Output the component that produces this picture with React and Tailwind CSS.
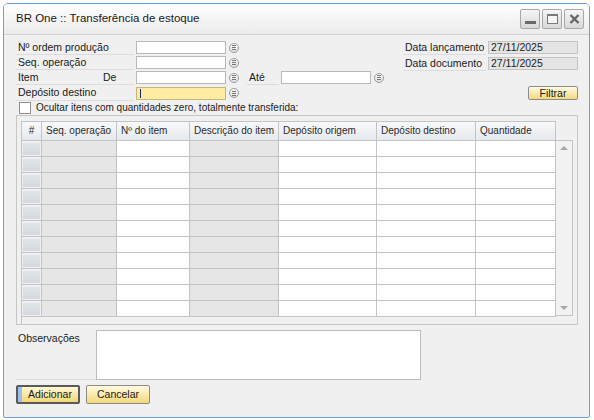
import React from 'react';

// SAP-style form: Transferência de estoque

const colunas = [
  { titulo: '#', w: 'w-[20px]', tipo: 'num' },
  { titulo: 'Seq. operação', w: 'w-[75px]', tipo: 'cinza' },
  { titulo: 'Nº do item', w: 'w-[73px]', tipo: 'branco' },
  { titulo: 'Descrição do item', w: 'w-[89px]', tipo: 'cinza' },
  { titulo: 'Depósito origem', w: 'w-[98px]', tipo: 'branco' },
  { titulo: 'Depósito destino', w: 'w-[99px]', tipo: 'branco' },
  { titulo: 'Quantidade', w: 'w-[80px]', tipo: 'branco' },
];

const linhas = Array.from({ length: 11 }, (_, i) => i);

function Lookup() {
  return (
    <div className="ml-[3px] w-[10px] h-[10px] rounded-full border border-[#9a9a9a] bg-gradient-to-b from-white to-[#dedede] flex flex-col items-center justify-center gap-[1px]">
      <div className="w-[4px] h-px bg-[#777]" />
      <div className="w-[4px] h-px bg-[#777]" />
      <div className="w-[4px] h-px bg-[#777]" />
    </div>
  );
}

function Campo({ amarelo, cinza, valor, cursor }) {
  let bg = 'bg-white border-[#b9b9b9]';
  if (amarelo) bg = 'bg-[#fdeca2] border-[#c8b878]';
  if (cinza) bg = 'bg-[#e5e5e5] border-[#c4c4c4]';
  return (
    <div className={`ml-[2px] w-[90px] h-[13px] border ${bg} flex items-center px-[2px] text-[10.5px] leading-none text-[#222] whitespace-nowrap`}>
      {cursor && <div className="ml-[1px] w-px h-[9px] bg-[#1a237e]" />}
      {valor}
    </div>
  );
}

function Rotulo({ children, w }) {
  return (
    <div className={`${w} h-[15px] border-b border-[#dcdcdc] pl-[2px] flex items-center text-[10.5px] leading-none text-[#1a1a1a] whitespace-nowrap`}>
      {children}
    </div>
  );
}

function BotaoJanela({ children }) {
  return (
    <div className="w-[20px] h-[20px] rounded-[2px] border border-[#a8a8a8] bg-gradient-to-b from-[#f6f6f6] to-[#d8d8d8] flex items-center justify-center">
      {children}
    </div>
  );
}

export default function App() {
  return (
    <div className="w-[594px] h-[420px] bg-white pt-[3px] pl-[3px] pr-[4px] pb-[2px] font-['Liberation_Sans',Arial,sans-serif]">
      <div className="h-full border border-[#6c9fdf] rounded-t-[5px] rounded-b-[2px] bg-[#f0f0f0] flex flex-col overflow-hidden">
        {/* Title bar */}
        <div className="h-[31px] shrink-0 bg-gradient-to-b from-white to-[#ebebeb] border-b border-[#d2d2d2] flex items-center pl-[12px] pr-[5px]">
          <span className="text-[11.5px] text-[#1a1a1a] whitespace-nowrap">BR One :: Transferência de estoque</span>
          <div className="ml-auto flex gap-[2px]">
            <BotaoJanela>
              <div className="mt-[7px] w-[11px] h-[3px] bg-[#6a6a6a]" />
            </BotaoJanela>
            <BotaoJanela>
              <div className="w-[11px] h-[10px] border border-[#7a7a7a] border-t-2 bg-[#f6f6f6]" />
            </BotaoJanela>
            <BotaoJanela>
              <svg width="11" height="10" viewBox="0 0 11 10">
                <path d="M1.5 1 L9.5 9 M9.5 1 L1.5 9" stroke="#666" strokeWidth="2.4" />
              </svg>
            </BotaoJanela>
          </div>
        </div>

        {/* Body */}
        <div className="flex-1 pl-[12px] pr-[11px] pt-[5px] flex flex-col">
          {/* Header form */}
          <div className="flex items-center h-[15px]">
            <Rotulo w="w-[118px]">Nº ordem produção</Rotulo>
            <Campo />
            <Lookup />
            <div className="ml-auto flex items-center">
              <Rotulo w="w-[83px]">Data lançamento</Rotulo>
              <Campo cinza valor="27/11/2025" />
            </div>
          </div>
          <div className="flex items-center h-[15px]">
            <Rotulo w="w-[118px]">Seq. operação</Rotulo>
            <Campo />
            <Lookup />
            <div className="ml-auto flex items-center mt-[2px]">
              <Rotulo w="w-[83px]">Data documento</Rotulo>
              <Campo cinza valor="27/11/2025" />
            </div>
          </div>
          <div className="flex items-center h-[15px]">
            <Rotulo w="w-[118px]">
              <span className="w-[85px]">Item</span>
              <span>De</span>
            </Rotulo>
            <Campo />
            <Lookup />
            <div className="ml-[8px]">
              <Rotulo w="w-[32px]">Até</Rotulo>
            </div>
            <Campo />
            <Lookup />
          </div>
          <div className="flex items-center h-[16px]">
            <Rotulo w="w-[118px]">Depósito destino</Rotulo>
            <Campo amarelo cursor />
            <Lookup />
            <button className="ml-auto w-[50px] h-[14px] rounded-[2px] border border-[#8c8c8c] bg-gradient-to-b from-[#fffbe3] to-[#f4d977] text-[10.5px] leading-none text-[#1a1a1a]">
              Filtrar
            </button>
          </div>

          {/* Checkbox */}
          <div className="flex items-center h-[14px]">
            <div className="ml-[3px] w-[12px] h-[12px] border border-[#8f8f8f] bg-white" />
            <span className="ml-[5px] text-[10px] leading-none text-[#1a1a1a] whitespace-nowrap">
              Ocultar itens com quantidades zero, totalmente transferida:
            </span>
          </div>

          {/* Matrix panel */}
          <div className="h-[210px] border border-[#c6c6c6] pl-[4px] pt-[5px] flex">
            <div className="flex flex-col border-l border-t border-[#c4c4c4]">
              <div className="flex h-[19px]">
                {colunas.map((c) => (
                  <div
                    key={c.titulo}
                    className={`${c.w} h-full border-r border-b border-[#c4c4c4] bg-gradient-to-b from-[#f8f9fa] to-[#e6e9ed] flex items-center text-[10px] leading-none text-[#2a2a2a] whitespace-nowrap overflow-hidden ${c.tipo === 'num' ? 'justify-center' : 'pl-[4px]'}`}
                  >
                    {c.titulo}
                  </div>
                ))}
              </div>
              {linhas.map((l) => (
                <div key={l} className="flex h-[16px]">
                  {colunas.map((c) => {
                    if (c.tipo === 'num') {
                      return (
                        <div key={c.titulo} className={`${c.w} h-full border-r border-b border-[#c4c4c4] p-[1px]`}>
                          <div className="w-full h-full bg-gradient-to-b from-[#e1e5ea] to-[#d3d8de] border-t border-[#eef0f3]" />
                        </div>
                      );
                    }
                    return (
                      <div
                        key={c.titulo}
                        className={`${c.w} h-full border-r border-b border-[#c4c4c4] ${c.tipo === 'cinza' ? 'bg-[#e6e6e6]' : 'bg-white'}`}
                      />
                    );
                  })}
                </div>
              ))}
            </div>
            <div className="flex flex-col">
              <div className="h-[19px]" />
              <div className="w-[17px] h-[176px] border border-l-0 border-[#c4c4c4] bg-[#f2f2f2] flex flex-col items-center justify-between py-[5px]">
                <div className="w-0 h-0 border-l-[4px] border-r-[4px] border-b-[4px] border-l-transparent border-r-transparent border-b-[#a8a8a8]" />
                <div className="w-0 h-0 border-l-[4px] border-r-[4px] border-t-[4px] border-l-transparent border-r-transparent border-t-[#a8a8a8]" />
              </div>
            </div>
          </div>

          {/* Observações */}
          <div className="flex mt-[5px]">
            <div className="w-[80px] h-[50px] border-b border-[#dcdcdc] pl-[2px] pt-[3px] text-[10.5px] leading-none text-[#1a1a1a]">
              Observações
            </div>
            <div className="w-[325px] h-[50px] border border-[#bdbdbd] bg-white" />
          </div>

          {/* Buttons */}
          <div className="flex mt-[5px] gap-[6px]">
            <button className="w-[64px] h-[19px] rounded-[2px] border-2 border-[#5a5a5a] bg-gradient-to-b from-[#fff8d6] to-[#f3d673] flex items-center text-[10.5px] leading-none text-[#1a1a1a] overflow-hidden">
              <div className="w-[4px] h-full bg-[#9fc0ea]" />
              <span className="flex-1 text-center">Adicionar</span>
            </button>
            <button className="w-[64px] h-[19px] rounded-[2px] border border-[#8a8a8a] bg-gradient-to-b from-[#fffae0] to-[#f4d977] text-[10.5px] leading-none text-[#1a1a1a]">
              Cancelar
            </button>
          </div>
        </div>
      </div>
    </div>
  );
}
